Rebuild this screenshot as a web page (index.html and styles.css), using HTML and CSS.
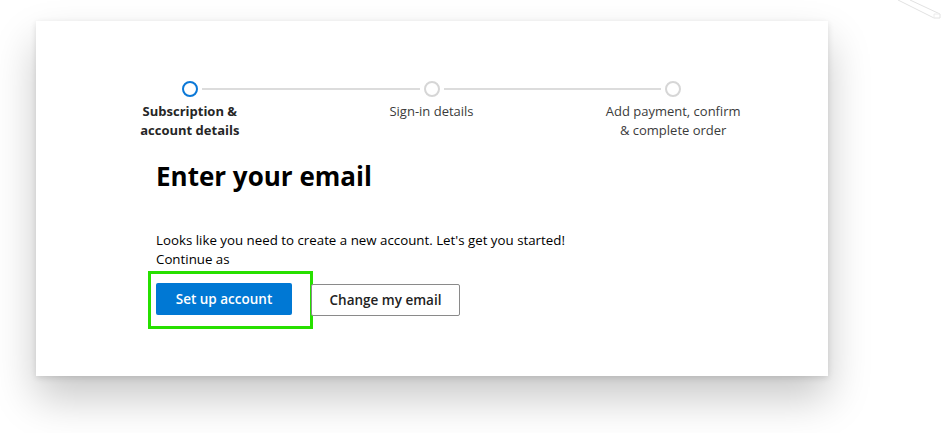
FILE: index.html
```html
<!DOCTYPE html>
<html>
<head>
<meta charset="utf-8">
<link rel="stylesheet" href="styles.css">
</head>
<body>
<svg class="deco" width="48" height="22" viewBox="0 0 48 22">
  <path d="M2 0 L38 18 L44 18 L44 14 L14 0" fill="none" stroke="#e2e2e2" stroke-width="1"/>
  <path d="M38 18 L38 14 L44 14" fill="none" stroke="#ececec" stroke-width="1"/>
</svg>
<div class="card">
  <div class="stepper">
    <div class="step active">
      <div class="track"><span class="line hidden"></span><span class="dot"></span><span class="line"></span></div>
      <div class="label">Subscription &amp;<br>account details</div>
    </div>
    <div class="step">
      <div class="track"><span class="line"></span><span class="dot"></span><span class="line"></span></div>
      <div class="label">Sign-in details</div>
    </div>
    <div class="step">
      <div class="track"><span class="line"></span><span class="dot"></span><span class="line hidden"></span></div>
      <div class="label">Add payment, confirm<br>&amp; complete order</div>
    </div>
  </div>
  <div class="content">
    <h1 class="title">Enter your email</h1>
    <p class="text">Looks like you need to create a new account. Let's get you started!<br>Continue as</p>
    <div class="actions">
      <div class="highlight"><button class="btn primary">Set up account</button></div>
      <button class="btn secondary">Change my email</button>
    </div>
  </div>
</div>
</body>
</html>
```
FILE: styles.css
```css
html, body {
  margin: 0;
  padding: 0;
  background: #ffffff;
}
body {
  font-family: "Open Sans", "Noto Sans", sans-serif;
  color: #1b1b1b;
  width: 944px;
  height: 433px;
  overflow: hidden;
  position: relative;
}
.deco {
  position: absolute;
  top: 0;
  right: 0;
}
.card {
  margin: 21px 0 0 36px;
  width: 792px;
  height: 355px;
  background: #fff;
  box-shadow: 0 22px 40px rgba(0, 0, 0, 0.22), 0 2px 6px rgba(0,0,0,0.12);
  box-sizing: border-box;
  padding-top: 60px;
}
.stepper {
  display: flex;
  margin: 0 34px 0 33px;
}
.step {
  flex: 1;
  display: flex;
  flex-direction: column;
  align-items: center;
}
.track {
  display: flex;
  align-items: center;
  width: 100%;
  height: 16px;
}
.line {
  flex: 1;
  height: 2px;
  background: #dcdcdc;
}
.line:first-child { margin-right: 4px; }
.line:last-child { margin-left: 4px; }
.line.hidden { background: transparent; }
.dot {
  width: 16px;
  height: 16px;
  box-sizing: border-box;
  border-radius: 50%;
  border: 2px solid #d6d6d6;
  flex: none;
}
.active .dot { border-color: #0b78d7; }
.label {
  margin-top: 5px;
  font-size: 13px;
  line-height: 19px;
  text-align: center;
  color: #3b3b3b;
}
.active .label {
  font-weight: 700;
  color: #262626;
}
.content {
  padding-left: 120px;
}
.title {
  margin: 19px 0 0 0;
  font-size: 26px;
  font-weight: 700;
  line-height: 34px;
  color: #000;
}
.text {
  margin: 38px 0 0 0;
  font-size: 13.3px;
  line-height: 19px;
  color: #000;
}
.actions {
  display: flex;
  align-items: center;
  margin-top: 2px;
  margin-left: -8px;
}
.highlight {
  border: 3px solid #27e000;
  padding: 9px 18px 11px 5px;
}
.btn {
  font-family: inherit;
  font-size: 13.5px;
  font-weight: 600;
  height: 32px;
  box-sizing: border-box;
  border-radius: 2px;
  cursor: pointer;
  padding: 0;
}
.primary {
  background: #0078d4;
  color: #fff;
  border: none;
  width: 136px;
  display: block;
}
.secondary {
  background: #fff;
  color: #222;
  border: 1px solid #8a8a8a;
  width: 149px;
  margin-left: -2px;
}
```
